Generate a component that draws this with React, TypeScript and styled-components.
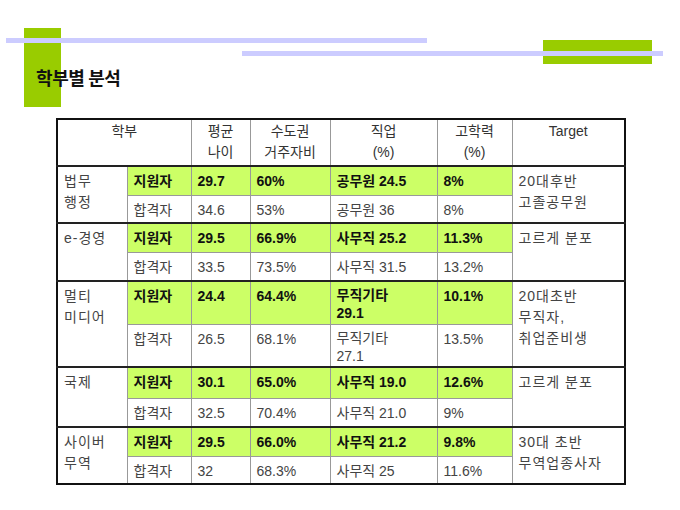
import React from "react";
import styled, { createGlobalStyle } from "styled-components";

const Global = createGlobalStyle`
  html, body { margin: 0; padding: 0; background: #fff; }
  body { font-family: "Liberation Sans", "Noto Sans CJK KR", sans-serif; }
`;

const Slide = styled.div`
  position: relative;
  width: 680px;
  height: 510px;
  overflow: hidden;
  background: #fff;
  padding-top: 66px;
  box-sizing: border-box;
`;

const Deco = styled.div<{ $l: number; $t: number; $w: number; $h: number; $c: string; $z: number }>`
  position: absolute;
  left: ${(p) => p.$l}px;
  top: ${(p) => p.$t}px;
  width: ${(p) => p.$w}px;
  height: ${(p) => p.$h}px;
  background: ${(p) => p.$c};
  z-index: ${(p) => p.$z};
`;

const Title = styled.h1`
  position: relative;
  z-index: 3;
  margin: 0 0 0 36px;
  font-family: "Noto Sans CJK KR", sans-serif;
  font-size: 18px;
  font-weight: 700;
  line-height: 22px;
  color: #111;
  letter-spacing: -0.4px;
`;

const Table = styled.table`
  margin: 30px 0 0 56px;
  width: 568px;
  table-layout: fixed;
  border-collapse: collapse;
  border: 2px solid #111;
  font-family: "Liberation Sans", "Noto Sans CJK KR", sans-serif;
  font-size: 14px;
  line-height: 20px;
`;

const Row = styled.tr<{ $h: number; $sep?: boolean }>`
  height: ${(p) => p.$h}px;
  & > td, & > th {
    border-top: ${(p) => (p.$sep ? "2px solid #222" : "1px solid #999")};
  }
`;

const Head = styled.th`
  border: 1px solid #999;
  border-bottom: 2px solid #222;
  padding: 1px 4px 0;
  vertical-align: top;
  text-align: center;
  font-weight: 400;
  line-height: 21px;
  color: #333;
`;

const Cell = styled.td<{ $green?: boolean; $tight?: boolean }>`
  border: 1px solid #999;
  padding: 4px 6px 0 6px;
  vertical-align: top;
  text-align: left;
  background: ${(p) => (p.$green ? "#ccff66" : "#fff")};
  font-weight: ${(p) => (p.$green ? 700 : 400)};
  color: ${(p) => (p.$green ? "#111" : "#444")};
  line-height: ${(p) => (p.$tight ? 18 : 20)}px;
  white-space: nowrap;
`;

const Group = styled(Cell)`
  letter-spacing: 1px;
  line-height: 21px;
`;

type Line = { sub: string; avg: string; metro: string; job: React.ReactNode; edu: string };
type Grp = {
  name: React.ReactNode;
  target: React.ReactNode;
  heights: [number, number];
  tight?: boolean;
  apply: Line;
  pass: Line;
};

const groups: Grp[] = [
  {
    name: <>법무<br />행정</>,
    target: <>20대후반<br />고졸공무원</>,
    heights: [29, 28],
    apply: { sub: "지원자", avg: "29.7", metro: "60%", job: "공무원 24.5", edu: "8%" },
    pass: { sub: "합격자", avg: "34.6", metro: "53%", job: "공무원 36", edu: "8%" },
  },
  {
    name: "e-경영",
    target: "고르게 분포",
    heights: [29, 29],
    apply: { sub: "지원자", avg: "29.5", metro: "66.9%", job: "사무직 25.2", edu: "11.3%" },
    pass: { sub: "합격자", avg: "33.5", metro: "73.5%", job: "사무직 31.5", edu: "13.2%" },
  },
  {
    name: <>멀티<br />미디어</>,
    target: <>20대초반<br />무직자,<br />취업준비생</>,
    heights: [43, 43],
    tight: true,
    apply: { sub: "지원자", avg: "24.4", metro: "64.4%", job: <>무직기타<br />29.1</>, edu: "10.1%" },
    pass: { sub: "합격자", avg: "26.5", metro: "68.1%", job: <>무직기타<br />27.1</>, edu: "13.5%" },
  },
  {
    name: "국제",
    target: "고르게 분포",
    heights: [31, 29],
    apply: { sub: "지원자", avg: "30.1", metro: "65.0%", job: "사무직 19.0", edu: "12.6%" },
    pass: { sub: "합격자", avg: "32.5", metro: "70.4%", job: "사무직 21.0", edu: "9%" },
  },
  {
    name: <>사이버<br />무역</>,
    target: <>30대 초반<br />무역업종사자</>,
    heights: [29, 28],
    apply: { sub: "지원자", avg: "29.5", metro: "66.0%", job: "사무직 21.2", edu: "9.8%" },
    pass: { sub: "합격자", avg: "32", metro: "68.3%", job: "사무직 25", edu: "11.6%" },
  },
];

const Cells = ({ line, green, tight }: { line: Line; green: boolean; tight?: boolean }) => (
  <>
    <Cell $green={green}>{line.sub}</Cell>
    <Cell $green={green}>{line.avg}</Cell>
    <Cell $green={green}>{line.metro}</Cell>
    <Cell $green={green} $tight={tight}>{line.job}</Cell>
    <Cell $green={green}>{line.edu}</Cell>
  </>
);

export default function App() {
  return (
    <>
      <Global />
      <Slide>
        <Deco $l={24} $t={28} $w={37} $h={79} $c="#99cc00" $z={1} />
        <Deco $l={543} $t={40} $w={109} $h={24} $c="#99cc00" $z={1} />
        <Deco $l={6} $t={38} $w={421} $h={5} $c="#ccccff" $z={2} />
        <Deco $l={242} $t={51} $w={421} $h={5} $c="#ccccff" $z={2} />
        <Title>학부별 분석</Title>
        <Table>
          <colgroup>
            <col style={{ width: 70 }} />
            <col style={{ width: 64 }} />
            <col style={{ width: 59 }} />
            <col style={{ width: 80 }} />
            <col style={{ width: 107 }} />
            <col style={{ width: 75 }} />
            <col style={{ width: 113 }} />
          </colgroup>
          <thead>
            <Row $h={47}>
              <Head colSpan={2}>학부</Head>
              <Head>평균<br />나이</Head>
              <Head>수도권<br />거주자비</Head>
              <Head>직업<br />(%)</Head>
              <Head>고학력<br />(%)</Head>
              <Head>Target</Head>
            </Row>
          </thead>
          <tbody>
            {groups.map((g, i) => (
              <React.Fragment key={i}>
                <Row $h={g.heights[0]} $sep>
                  <Group rowSpan={2}>{g.name}</Group>
                  <Cells line={g.apply} green tight={g.tight} />
                  <Group rowSpan={2}>{g.target}</Group>
                </Row>
                <Row $h={g.heights[1]}>
                  <Cells line={g.pass} green={false} tight={g.tight} />
                </Row>
              </React.Fragment>
            ))}
          </tbody>
        </Table>
      </Slide>
    </>
  );
}
